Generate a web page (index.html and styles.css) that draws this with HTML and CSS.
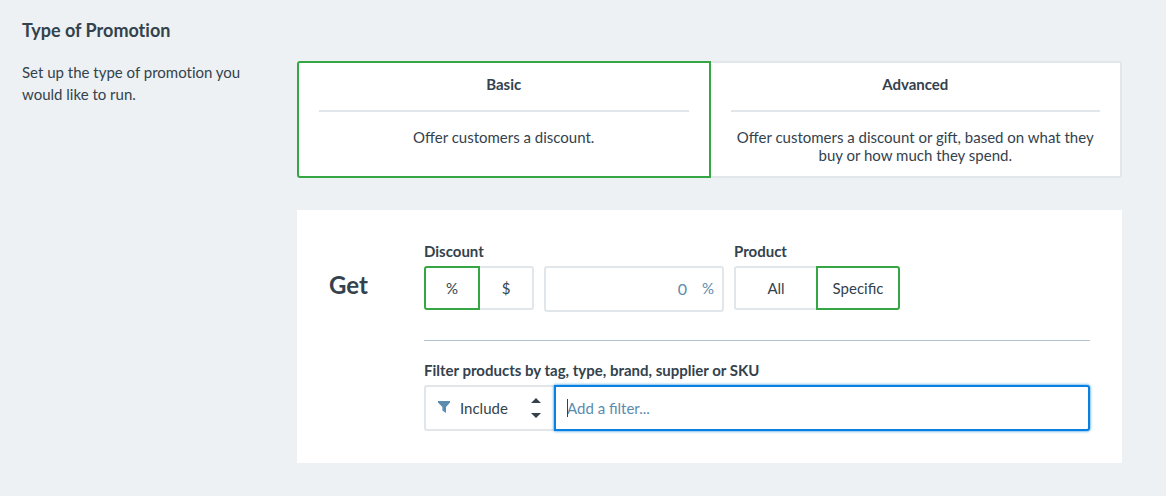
FILE: index.html
```html
<!DOCTYPE html>
<html lang="en">
<head>
<meta charset="utf-8">
<meta name="viewport" content="width=device-width, initial-scale=1">
<title>Type of Promotion</title>
<link rel="stylesheet" href="styles.css">
</head>
<body>
<main class="page">
  <section class="intro">
    <h1 class="intro-title">Type of Promotion</h1>
    <p class="intro-text">Set up the type of promotion you would like to run.</p>
  </section>
  <div class="content">
    <div class="modes" role="group" aria-label="Type of promotion">
      <button type="button" class="mode selected" aria-pressed="true">
        <span class="mode-title">Basic</span>
        <span class="mode-text">Offer customers a discount.</span>
      </button>
      <button type="button" class="mode" aria-pressed="false">
        <span class="mode-title">Advanced</span>
        <span class="mode-text">Offer customers a discount or gift, based on what they buy or how much they spend.</span>
      </button>
    </div>
    <form class="panel">
      <h2 class="panel-title">Get</h2>
      <div class="fields">
        <div class="row">
          <div class="field">
            <label class="label" for="amount">Discount</label>
            <div class="discount">
              <div class="segments" role="group" aria-label="Discount unit">
                <button type="button" class="segment unit selected" aria-pressed="true">%</button>
                <button type="button" class="segment unit" aria-pressed="false">$</button>
              </div>
              <div class="amount">
                <input class="amount-input" id="amount" type="text" inputmode="decimal" placeholder="0">
                <span class="amount-unit">%</span>
              </div>
            </div>
          </div>
          <div class="field">
            <span class="label" id="product-label">Product</span>
            <div class="segments" role="group" aria-labelledby="product-label">
              <button type="button" class="segment scope" aria-pressed="false">All</button>
              <button type="button" class="segment scope selected" aria-pressed="true">Specific</button>
            </div>
          </div>
        </div>
        <hr class="divider">
        <div class="field">
          <label class="label" for="filter">Filter products by tag, type, brand, supplier or SKU</label>
          <div class="filter">
            <div class="include">
              <svg class="funnel" width="12" height="12" viewBox="0 0 12 12" aria-hidden="true"><path d="M0 0h12v1.4L8 6v6L4.4 9.6V6L0 1.4z"/></svg>
              <select class="include-select" aria-label="Filter mode">
                <option>Include</option>
                <option>Exclude</option>
              </select>
              <svg class="arrows" width="10" height="20" viewBox="0 0 10 20" aria-hidden="true"><path d="M0 5L5 0l5 5zM0 15h10l-5 5z"/></svg>
            </div>
            <div class="search">
              <input class="search-input" id="filter" type="text" placeholder="Add a filter...">
              <span class="caret"></span>
            </div>
          </div>
        </div>
      </div>
    </form>
  </div>
</main>
</body>
</html>
```
FILE: styles.css
```css
* {
  box-sizing: border-box;
}

body {
  margin: 0;
  background: #edf1f3;
  color: #33424d;
  font: 15px/22px Lato, sans-serif;
}

button,
input,
select {
  margin: 0;
  border: 2px solid #e1e6ea;
  border-radius: 3px;
  background: #fff;
  color: inherit;
  font: inherit;
  outline: none;
}

.page {
  display: grid;
  grid-template-columns: 235px minmax(0, 1fr);
  gap: 40px;
  padding: 19px 44px 32px 22px;
}

.intro {
  font-variant-ligatures: none;
}

.intro-title {
  margin: 0 0 20px;
  font-size: 18px;
  line-height: 22px;
}

.intro-text {
  margin: 0;
}

.content {
  padding-top: 42px;
}

.modes {
  display: flex;
  margin-bottom: 32px;
}

.mode {
  display: flex;
  flex: 1 1 0;
  flex-direction: column;
  padding: 12px 20px;
  line-height: 18px;
  text-align: center;
}

.mode + .mode,
.segment + .segment {
  margin-left: -2px;
}

.mode:first-child,
.segment:first-child {
  border-top-right-radius: 0;
  border-bottom-right-radius: 0;
}

.mode:last-child,
.segment:last-child {
  border-top-left-radius: 0;
  border-bottom-left-radius: 0;
}

.mode.selected,
.segment.selected {
  z-index: 1;
  position: relative;
  border-color: #36a644;
}

.mode-title {
  align-self: stretch;
  margin-bottom: 16px;
  padding-bottom: 17px;
  border-bottom: 2px solid #e1e6ea;
  font-weight: 700;
}

.mode-text {
  align-self: stretch;
}

.panel {
  display: grid;
  grid-template-columns: 95px minmax(0, 1fr);
  padding: 31px 32px 32px;
  background: #fff;
}

.panel-title {
  margin: 28px 0 0;
  font-size: 24px;
  line-height: 32px;
}

.row {
  display: flex;
  gap: 10px;
}

.field {
  display: flex;
  flex-direction: column;
  gap: 5px;
}

.label {
  font-weight: 700;
  line-height: 20px;
}

.discount {
  display: flex;
  align-items: flex-start;
  gap: 10px;
}

.segments {
  display: flex;
}

.segment {
  height: 44px;
  padding: 0;
}

.unit {
  width: 56px;
}

.scope {
  width: 84px;
}

.amount {
  position: relative;
  width: 180px;
}

.amount-input {
  display: block;
  width: 100%;
  height: 46px;
  padding: 0 35px 2px 12px;
  font-size: 16px;
  text-align: right;
}

.amount-unit {
  position: absolute;
  top: 11px;
  right: 10px;
  color: #5b8bae;
}

input::placeholder {
  color: #5b8bae;
  opacity: 1;
}

.divider {
  height: 1px;
  margin: 28px 0 19px;
  border: 0;
  background: #b3c1cc;
}

.filter {
  display: flex;
}

.include {
  position: relative;
  width: 132px;
}

.include-select {
  display: block;
  width: 100%;
  height: 46px;
  padding: 0 30px 0 34px;
  appearance: none;
}

.funnel {
  position: absolute;
  top: 16px;
  left: 14px;
  fill: #5b8bae;
}

.arrows {
  position: absolute;
  top: 13px;
  right: 15px;
  fill: #33424d;
}

.search {
  position: relative;
  flex: 1;
  margin-left: -2px;
}

.search-input {
  display: block;
  width: 100%;
  height: 46px;
  padding: 0 11px;
  border-color: #0a80e0;
  border-radius: 0 3px 3px 0;
  box-shadow: 0 0 3px #0a80e0;
}

.caret {
  position: absolute;
  top: 14px;
  left: 13px;
  width: 1px;
  height: 18px;
  background: #33424d;
}
```
